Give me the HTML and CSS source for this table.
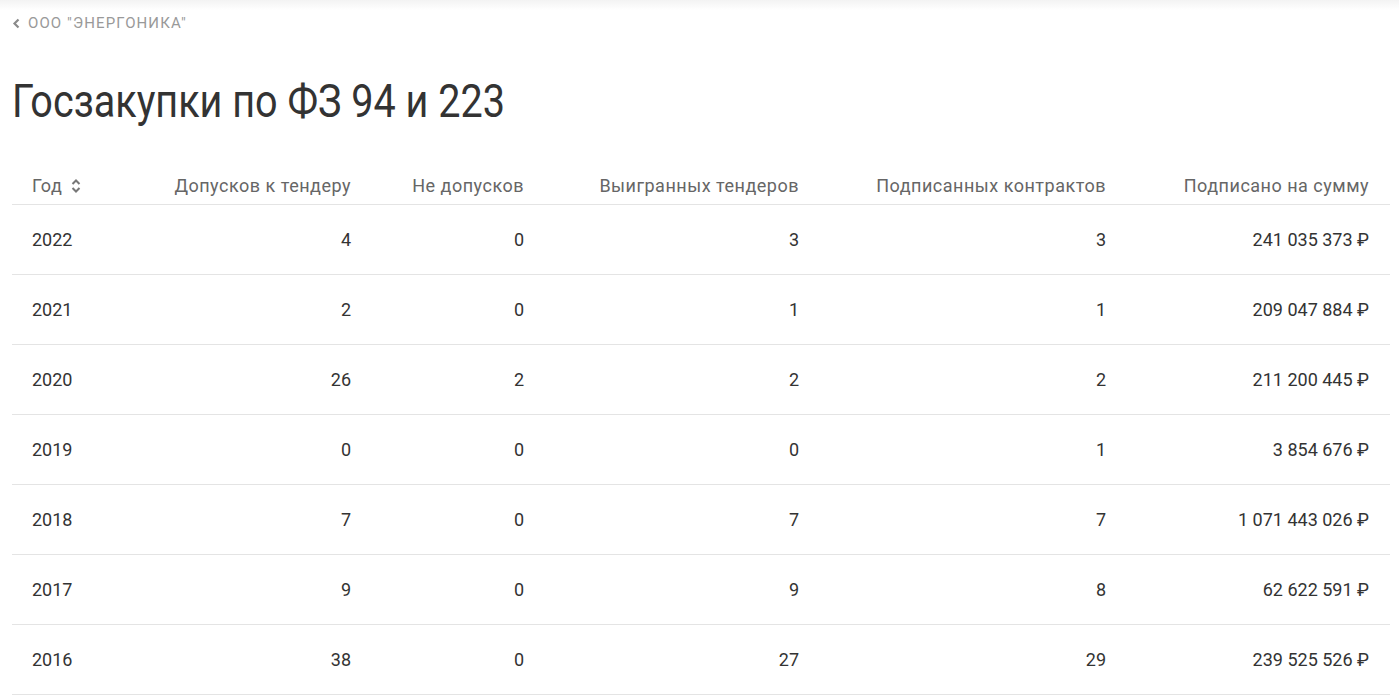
FILE: index.html
```html
<!DOCTYPE html>
<html lang="ru">
<head>
  <meta charset="UTF-8">
  <meta name="viewport" content="width=device-width, initial-scale=1.0">
  <title>Госзакупки по ФЗ 94 и 223</title>
  <link rel="stylesheet" href="styles.css">
</head>
<body>

<div class="topbar"></div>

<div class="page">
  <a class="back" href="#">
    <svg class="back-icon" width="8" height="11" viewBox="0 0 8 11"><path d="M6.5 1.5 L2.5 5.5 L6.5 9.5" fill="none" stroke="#8a8a8a" stroke-width="2.2"/></svg>
    ООО "ЭНЕРГОНИКА"
  </a>

  <h1>Госзакупки по ФЗ 94 и 223</h1>

  <table class="stats">
    <thead>
      <tr>
        <th class="col-year">Год
          <svg class="sort" width="12" height="16" viewBox="0 0 12 16"><path d="M2.5 6 L6 2.5 L9.5 6 M2.5 10 L6 13.5 L9.5 10" fill="none" stroke="#777" stroke-width="2"/></svg>
        </th>
        <th class="col-a">Допусков к тендеру</th>
        <th class="col-b">Не допусков</th>
        <th class="col-c">Выигранных тендеров</th>
        <th class="col-d">Подписанных контрактов</th>
        <th class="col-e">Подписано на сумму</th>
      </tr>
    </thead>
    <tbody>
      <tr><td>2022</td><td>4</td><td>0</td><td>3</td><td>3</td><td>241 035 373 ₽</td></tr>
      <tr><td>2021</td><td>2</td><td>0</td><td>1</td><td>1</td><td>209 047 884 ₽</td></tr>
      <tr><td>2020</td><td>26</td><td>2</td><td>2</td><td>2</td><td>211 200 445 ₽</td></tr>
      <tr><td>2019</td><td>0</td><td>0</td><td>0</td><td>1</td><td>3 854 676 ₽</td></tr>
      <tr><td>2018</td><td>7</td><td>0</td><td>7</td><td>7</td><td>1 071 443 026 ₽</td></tr>
      <tr><td>2017</td><td>9</td><td>0</td><td>9</td><td>8</td><td>62 622 591 ₽</td></tr>
      <tr><td>2016</td><td>38</td><td>0</td><td>27</td><td>29</td><td>239 525 526 ₽</td></tr>
    </tbody>
  </table>
</div>

</body>
</html>
```

FILE: styles.css
```css
body {
  margin: 0;
  font-family: Roboto, "Noto Sans", Arial, sans-serif;
  background-color: #ffffff;
  color: #333;
}
.topbar {
  height: 10px;
  background: linear-gradient(#f3f3f3, #ffffff);
}
.page {
  padding: 0 9px 0 12px;
}
.back {
  display: flex;
  align-items: center;
  gap: 8px;
  margin-top: 4px;
  font-size: 15px;
  color: #999;
  text-decoration: none;
  letter-spacing: 1.1px;
}
h1 {
  margin: 39px 0 0;
  font-size: 46px;
  font-weight: 400;
  color: #333;
  line-height: 60px;
  transform: scaleX(0.86);
  transform-origin: left center;
}
.stats {
  width: 1378px;
  margin-top: 35px;
  border-collapse: collapse;
  table-layout: fixed;
  font-size: 18px;
}
.stats th,
.stats td {
  box-sizing: border-box;
}
.stats th {
  height: 38px;
  padding: 0 21px 8px 20px;
  font-weight: 400;
  color: #666;
  letter-spacing: 0.5px;
  text-align: right;
  vertical-align: bottom;
  border-bottom: 1px solid #e4e4e4;
  white-space: nowrap;
}
.stats th.col-year {
  text-align: left;
}
.sort {
  margin-left: 3px;
  vertical-align: -2px;
}
.col-year { width: 130px; }
.col-a { width: 230px; }
.col-b { width: 173px; }
.col-c { width: 275px; }
.col-d { width: 307px; }
.col-e { width: 263px; }
.stats td {
  height: 70px;
  padding: 0 21px 0 20px;
  text-align: right;
  border-bottom: 1px solid #e4e4e4;
}
.stats td:first-child {
  text-align: left;
}
```
